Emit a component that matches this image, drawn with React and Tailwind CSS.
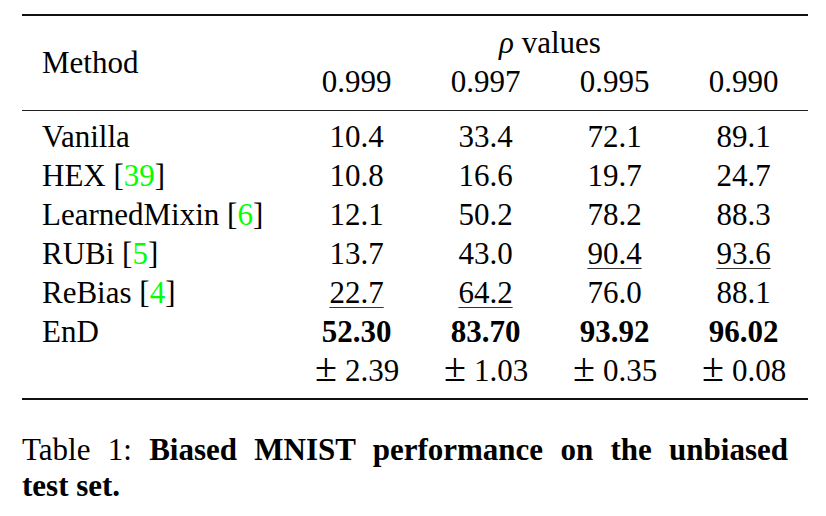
import React from 'react';

// Results table: Biased MNIST (rows of method + four rho columns)
const rows = [
  { name: 'Vanilla', cite: null, vals: ['10.4', '33.4', '72.1', '89.1'], under: [] },
  { name: 'HEX', cite: '39', vals: ['10.8', '16.6', '19.7', '24.7'], under: [] },
  { name: 'LearnedMixin', cite: '6', vals: ['12.1', '50.2', '78.2', '88.3'], under: [] },
  { name: 'RUBi', cite: '5', vals: ['13.7', '43.0', '90.4', '93.6'], under: [2, 3] },
  { name: 'ReBias', cite: '4', vals: ['22.7', '64.2', '76.0', '88.1'], under: [0, 1] },
];

const rhos = ['0.999', '0.997', '0.995', '0.990'];
const endVals = ['52.30', '83.70', '93.92', '96.02'];
const endStd = ['2.39', '1.03', '0.35', '0.08'];

const Cite = ({ n }) => (
  <span>
    {' '}[<span className="text-[#00ff00]">{n}</span>]
  </span>
);

export default function App() {
  return (
    <div className="w-[826px] h-[516px] bg-white text-black font-['Liberation_Serif','Times_New_Roman',serif] text-[31px] leading-[39px] overflow-hidden">
      <div className="pt-[14px] pl-[22px]">
        <div className="w-[786px] border-t-2 border-b-2 border-[#111]">
          {/* Header */}
          <div className="grid grid-cols-[270px_repeat(4,129px)] pt-[7px] pb-[9px] border-b border-[#222]">
            <div className="row-span-2 self-center pl-[20px]">Method</div>
            <div className="col-span-4 text-center">
              <i>ρ</i> values
            </div>
            {rhos.map((r) => (
              <div key={r} className="text-center">
                {r}
              </div>
            ))}
          </div>

          {/* Body */}
          <div className="grid grid-cols-[270px_repeat(4,129px)] pt-[6px] pb-[8px]">
            {rows.map((row) => (
              <React.Fragment key={row.name}>
                <div className="pl-[20px] whitespace-nowrap">
                  {row.name}
                  {row.cite && <Cite n={row.cite} />}
                </div>
                {row.vals.map((v, i) => (
                  <div key={i} className="text-center">
                    {row.under.includes(i) ? (
                      <span className="underline decoration-1 underline-offset-[4px] decoration-[#333]">{v}</span>
                    ) : (
                      v
                    )}
                  </div>
                ))}
              </React.Fragment>
            ))}
            <div className="pl-[20px]">EnD</div>
            {endVals.map((v) => (
              <div key={v} className="text-center font-bold">
                {v}
              </div>
            ))}
            <div />
            {endStd.map((v) => (
              <div key={v} className="flex items-baseline justify-center whitespace-nowrap">
                <span className="inline-block w-[24px] text-center mr-[7px] text-[40px] leading-[30px]">±</span>
                <span>{v}</span>
              </div>
            ))}
          </div>
        </div>

        {/* Caption */}
        <p className="mt-[32px] w-[766px] leading-[36px]">
          <span className="block text-justify [text-align-last:justify]">
            Table 1: <b>Biased MNIST performance on the unbiased</b>
          </span>
          <span className="block font-bold">test set.</span>
        </p>
      </div>
    </div>
  );
}
